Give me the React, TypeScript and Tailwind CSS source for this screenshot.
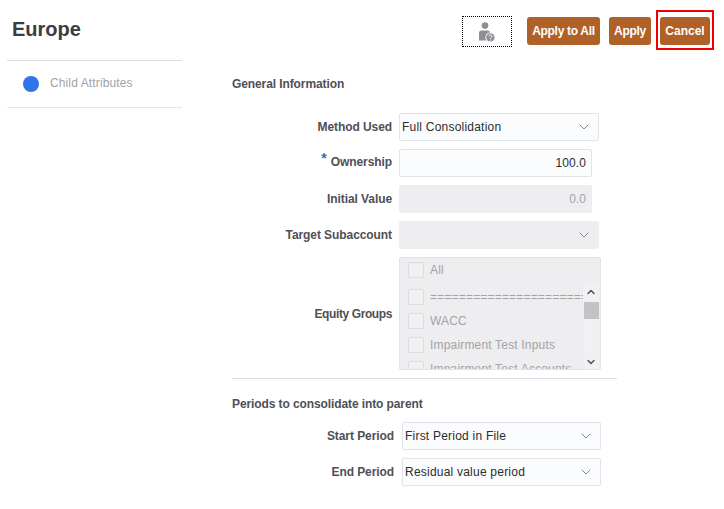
import { ChevronDown, ChevronUp } from "lucide-react";

const equityGroups = [
  "=======================================",
  "WACC",
  "Impairment Test Inputs",
  "Impairment Test Accounts",
];

function Chevron() {
  return (
    <svg viewBox="0 0 10 6" className="mr-[1px] h-[6px] w-[10px]" fill="none" stroke="#85878c" strokeWidth={1}>
      <path d="M.7 .7 5 5 9.3 .7" />
    </svg>
  );
}

function Select({ value, disabled, width }: { value?: string; disabled?: boolean; width: string }) {
  return (
    <div
      className={`flex h-[28px] items-center justify-between rounded-[2px] border pl-[2px] pr-[8px] text-[12px] tracking-[0.22px] text-[#2c2c2c] ${width} ${
        disabled ? "border-[#eeeef0] bg-[#eeeef0]" : "border-[#dfe4ea] bg-[#fbfcfe]"
      }`}
    >
      <span>{value}</span>
      <Chevron />
    </div>
  );
}

function Row({ label, labelWidth, children }: { label: React.ReactNode; labelWidth: string; children: React.ReactNode }) {
  return (
    <div className="flex items-center gap-[7px]">
      <div className={`text-right text-[12px] font-bold tracking-[-0.08px] text-[#4f4f55] ${labelWidth}`}>{label}</div>
      {children}
    </div>
  );
}

function Check({ label }: { label: string }) {
  return (
    <div className="flex h-[24px] shrink-0 items-center gap-[6px] whitespace-nowrap text-[12px] tracking-[0.18px] text-[#a3a3a7]">
      <span className="h-[16px] w-[16px] shrink-0 rounded-[2px] border border-[#dcdce0] bg-[#f0f0f2]" />
      <span>{label}</span>
    </div>
  );
}

function Btn({ children, width, tight }: { children: React.ReactNode; width: string; tight?: boolean }) {
  return (
    <button
      className={`flex h-[28px] items-center justify-center rounded-[3px] bg-[#b06128] text-[12px] font-bold text-white ${width} ${
        tight ? "tracking-[-0.3px]" : ""
      }`}
    >
      {children}
    </button>
  );
}

export default function App() {
  return (
    <div className="h-[509px] w-[724px] overflow-hidden bg-white font-['Liberation_Sans',Arial,sans-serif]">
      <header className="flex h-[60px] items-start pl-[12px] pr-[10px]">
        <h1 className="mt-[17px] text-[20px] leading-[24px] font-bold text-[#3d3d40]">Europe</h1>
        <div className="ml-auto mt-[10px] flex items-start">
          <button className="mr-[15px] mt-[6px] flex h-[31px] w-[50px] items-center justify-center border border-dotted border-black">
            <svg viewBox="0 0 18 20" className="h-[20px] w-[18px]">
              <circle cx="7" cy="3.6" r="3.3" fill="#8c8f94" />
              <path d="M1 11a2.5 2.5 0 0 1 2.5-2.5h6A2.5 2.5 0 0 1 12 11v7.5H1z" fill="#8c8f94" />
              <circle cx="12.4" cy="15.4" r="5" fill="#ffffff" />
              <circle cx="12.4" cy="15.4" r="4.2" fill="#8c8f94" />
              <path d="M10.9 14.4a1.5 1.5 0 1 1 2.3 1.3c-.6.4-.8.6-.8 1.1" fill="none" stroke="#ffffff" strokeWidth={1} />
              <circle cx="12.4" cy="18" r=".6" fill="#ffffff" />
            </svg>
          </button>
          <div className="mt-[7px] flex gap-[9px]">
            <Btn width="w-[73px]" tight>Apply to All</Btn>
            <Btn width="w-[42px]" tight>Apply</Btn>
          </div>
          <div className="ml-[5px] flex h-[40px] w-[58px] items-start justify-center border-[2px] border-[#f00000] pt-[5px]">
            <Btn width="w-[50px]">Cancel</Btn>
          </div>
        </div>
      </header>

      <div className="flex pl-[7px]">
        <aside className="h-[48px] w-[175px] border-y border-t-[#d6dde4] border-b-[#e6e8ec]">
          <div className="flex h-[46px] items-center gap-[11px] pl-[16px]">
            <span className="h-[16px] w-[16px] rounded-full bg-[#2f74e8]" />
            <span className="mb-[2px] text-[12px] tracking-[0.12px] text-[#a2a2a8]">Child Attributes</span>
          </div>
        </aside>

        <main className="ml-[50px] w-[385px]">
          <h2 className="mt-[17px] text-[12px] leading-[14px] font-bold tracking-[-0.1px] text-[#4f4f55]">General Information</h2>

          <div className="mt-[22px] flex flex-col gap-[8px]">
            <Row label="Method Used" labelWidth="w-[160px]">
              <Select value="Full Consolidation" width="w-[200px]" />
            </Row>
            <Row
              label={
                <span className="mb-[2px] block">
                  <span className="relative -top-[3px] mr-[4px] text-[14px] leading-[0] font-bold text-[#2f6fb5]">*</span>
                  Ownership
                </span>
              }
              labelWidth="w-[160px]"
            >
              <div className="flex h-[28px] w-[193px] items-center justify-end rounded-[2px] border border-[#dfe4ea] bg-[#fbfcfe] pr-[5px] text-[12px] tracking-[0.1px] text-[#2c2c2c]">
                100.0
              </div>
            </Row>
            <Row label="Initial Value" labelWidth="w-[160px]">
              <div className="flex h-[28px] w-[193px] items-center justify-end rounded-[2px] bg-[#eeeef0] pr-[6px] text-[12px] text-[#a3a3a7]">
                0.0
              </div>
            </Row>
            <Row label="Target Subaccount" labelWidth="w-[160px]">
              <Select disabled width="w-[200px]" />
            </Row>
            <Row label={<span className="tracking-[-0.4px]">Equity Groups</span>} labelWidth="w-[160px]">
              <div className="relative flex h-[113px] w-[202px] flex-col overflow-hidden rounded-[2px] border border-[#e2e2e6] bg-[#eeeef0] pl-[8px]">
                <Check label="All" />
                <div className="mt-[3px] flex w-[175px] flex-col overflow-hidden">
                  {equityGroups.map((g) => (
                    <Check key={g} label={g} />
                  ))}
                </div>
                <div className="absolute right-[1px] top-[27px] flex h-[84px] w-[16px] flex-col items-center justify-between bg-[#f1f1f3] py-[1px]">
                  <ChevronUp size={12} strokeWidth={3} className="text-[#55555a]" />
                  <ChevronDown size={12} strokeWidth={3} className="text-[#55555a]" />
                  <span className="absolute left-[1px] top-[17px] h-[17px] w-[15px] bg-[#c3c3c5]" />
                </div>
              </div>
            </Row>
          </div>

          <div className="mt-[8px] border-t border-[#d8dee5]" />

          <h2 className="mt-[18px] text-[12px] leading-[14px] font-bold tracking-[-0.1px] text-[#4f4f55]">Periods to consolidate into parent</h2>

          <div className="mt-[11px] flex flex-col gap-[8px]">
            <Row label="Start Period" labelWidth="w-[162px]">
              <Select value="First Period in File" width="ml-[1px] w-[199px]" />
            </Row>
            <Row label="End Period" labelWidth="w-[162px]">
              <Select value="Residual value period" width="ml-[1px] w-[199px]" />
            </Row>
          </div>
        </main>
      </div>
    </div>
  );
}
